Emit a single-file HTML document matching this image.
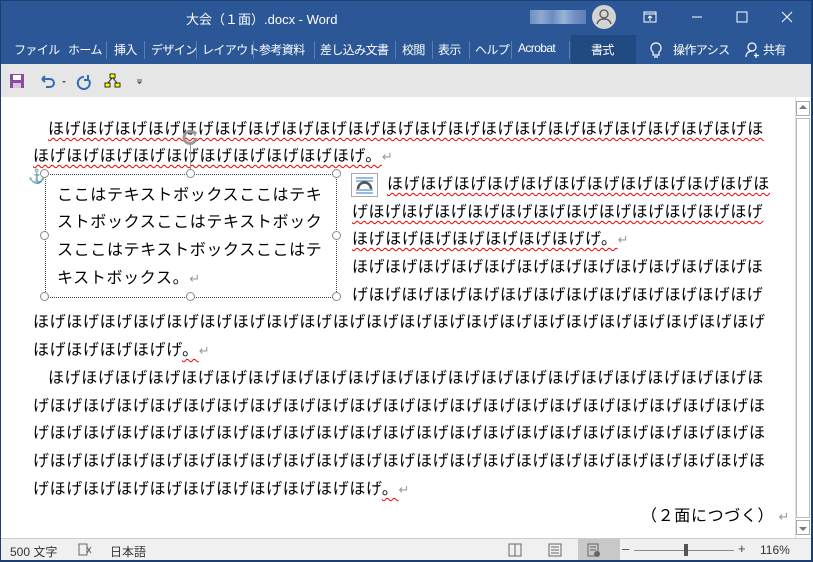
<!DOCTYPE html>
<html><head><meta charset="utf-8"><style>
*{margin:0;padding:0;box-sizing:border-box}
body{width:813px;height:562px;overflow:hidden;font-family:"Liberation Sans","Noto Sans CJK JP",sans-serif;background:#fff;position:relative}
.abs{position:absolute;white-space:nowrap}
#title{left:0;top:0;width:813px;height:35px;background:#2b5797;border:1px solid #1d3f70;border-bottom:none}
#ribbon{left:0;top:35px;width:813px;height:29px;background:#2b5797}
.tab{position:absolute;top:41px;color:#fff;font-size:12px;letter-spacing:-0.6px}
.sep{position:absolute;top:41px;width:1px;height:18px;background:#5b7fb5}
#qat{left:0;top:64px;width:813px;height:33px;background:#e6e6e6}
#doc{left:1px;top:97px;width:794px;height:441px;background:#fff}
#sb{left:795px;top:97px;width:16px;height:441px;background:#fff;border-left:1px solid #ddd}
#status{left:0;top:538px;width:813px;height:24px;background:#f0f0f0;border-top:1px solid #ccc;font-size:12px;color:#333}
.t{position:absolute;white-space:nowrap;font-family:"Noto Sans CJK JP","IPAGothic",sans-serif;font-size:16px;letter-spacing:0.65px;line-height:20px;color:#000}
.w{text-decoration:underline wavy #e00;text-decoration-thickness:1px;text-underline-offset:3px}
.r{color:#999;font-size:13px}
.h{position:absolute;width:9px;height:9px;border:1.5px solid #8a8a8a;background:#fff;border-radius:50%}
</style></head><body>
<div id="title" class="abs"></div>
<div class="abs" style="left:186px;top:9px;color:#fff;font-size:13px">大会（１面）.docx  -  Word</div>
<div class="abs" style="left:530px;top:10px;width:56px;height:14px;background:linear-gradient(90deg,#6e8fc0,#8fa9d0,#6a8cc0,#9bb3d8,#7090c2,#5a7fb8)"></div>
<div class="abs" style="left:592px;top:5px;width:24px;height:24px;border-radius:50%;background:#d4d4d4"><svg width="24" height="24"><circle cx="12" cy="9" r="4" fill="none" stroke="#555" stroke-width="1.3"/><path d="M5 19c1-4 4-5 7-5s6 1 7 5" fill="none" stroke="#555" stroke-width="1.3"/></svg></div>
<svg class="abs" style="left:640px;top:8px" width="170" height="20"><rect x="4" y="4" width="12" height="10" fill="none" stroke="#fff"/><line x1="4" y1="6" x2="16" y2="6" stroke="#fff"/><path d="M10 13V8M8 10l2-2 2 2" stroke="#fff" fill="none"/><line x1="52" y1="9" x2="62" y2="9" stroke="#fff"/><rect x="97" y="4" width="10" height="10" fill="none" stroke="#fff"/><path d="M142 4l10 10M152 4l-10 10" stroke="#fff"/></svg>
<div id="ribbon" class="abs"></div>
<div class="abs" style="left:571px;top:35px;width:65px;height:29px;background:#214a82"></div>
<div class="tab" style="left:14px">ファイル</div>
<div class="tab" style="left:68px">ホーム</div><div class="sep" style="left:106px"></div>
<div class="tab" style="left:114px">挿入</div><div class="sep" style="left:144px"></div>
<div class="tab" style="left:151px">デザイン</div><div class="sep" style="left:196px"></div>
<div class="tab" style="left:202px">レイアウト</div><div class="sep" style="left:253px"></div>
<div class="tab" style="left:259px">参考資料</div><div class="sep" style="left:314px"></div>
<div class="tab" style="left:320px">差し込み文書</div><div class="sep" style="left:395px"></div>
<div class="tab" style="left:402px">校閲</div><div class="sep" style="left:432px"></div>
<div class="tab" style="left:438px">表示</div><div class="sep" style="left:469px"></div>
<div class="tab" style="left:475px">ヘルプ</div><div class="sep" style="left:511px"></div>
<div class="tab" style="left:518px">Acrobat</div><div class="sep" style="left:569px"></div>
<div class="tab" style="left:591px">書式</div>
<svg class="abs" style="left:648px;top:41px" width="16" height="18"><path d="M8 2a5 5 0 0 0-3 9v3h6v-3a5 5 0 0 0-3-9zM6 16h4" fill="none" stroke="#fff" stroke-width="1.2"/></svg>
<div class="tab" style="left:673px">操作アシス</div>
<div class="abs" style="left:731px;top:35px;width:12px;height:29px;background:#2b5797"></div>
<svg class="abs" style="left:744px;top:41px" width="18" height="18"><circle cx="8" cy="6" r="4" fill="none" stroke="#fff" stroke-width="1.2"/><path d="M2 16c0-4 3-6 6-6M12 12v5M10 14.5h5" fill="none" stroke="#fff" stroke-width="1.2"/></svg>
<div class="tab" style="left:763px">共有</div>
<div id="qat" class="abs"></div>
<svg class="abs" style="left:8px;top:72px" width="140" height="18"><rect x="2" y="2" width="14" height="14" fill="#8b4c9e"/><rect x="5" y="3" width="8" height="5" fill="#fff"/><rect x="5" y="11" width="8" height="5" fill="#d9c3e0"/><path d="M34 7h8a4 4 0 0 1 0 8h-4M34 7l3-3M34 7l3 3" fill="none" stroke="#2f6db5" stroke-width="2"/><path d="M54 9l2 2 2-2" fill="#555"/><path d="M76 5a6 6 0 1 0 5 3M80 3v5h-4" fill="none" stroke="#2f6db5" stroke-width="2"/><rect x="102" y="2" width="5" height="4" fill="#ff0" stroke="#000" stroke-width=".8"/><rect x="97" y="11" width="5" height="4" fill="#ff0" stroke="#000" stroke-width=".8"/><rect x="107" y="11" width="5" height="4" fill="#ff0" stroke="#000" stroke-width=".8"/><path d="M104 6l-4 5M105 6l4 5" stroke="#000" stroke-width=".8"/><path d="M129 8h5M130 10h3l-1.5 1.5z" stroke="#555" fill="#555"/></svg>
<div id="doc" class="abs"></div>
<div id="sb" class="abs"><div style="position:absolute;left:0;top:4px;width:14px;height:15px;border:1px solid #aaa;background:#fff"></div><div style="position:absolute;left:0;top:21px;width:14px;height:400px;border:1px solid #bbb"></div><div style="position:absolute;left:0;top:423px;width:14px;height:15px;border:1px solid #aaa"></div></div>
<svg class="abs" style="left:797px;top:102px" width="12" height="10"><path d="M2 7l4-4 4 4z" fill="#777"/></svg>
<svg class="abs" style="left:797px;top:524px" width="12" height="10"><path d="M2 3l4 4 4-4z" fill="#777"/></svg>

<div class="t w" style="left:48px;top:117px">ほげほげほげほげほげほげほげほげほげほげほげほげほげほげほげほげほげほげほげほげほげほ</div>
<div class="t" style="left:33px;top:144px"><span class="w">ほげほげほげほげほげほげほげほげほげほげ。</span><span class="r">↵</span></div>

<div class="abs" style="left:45px;top:174px;width:292px;height:124px;border:1px dotted #444"></div>
<div class="abs" style="left:190px;top:142px;width:1px;height:32px;background:#999"></div>
<svg class="abs" style="left:180px;top:128px" width="22" height="20"><path d="M16 10a6 6 0 1 1-2-5" fill="none" stroke="#999" stroke-width="3"/><path d="M12 2l5 2-2 5z" fill="#999"/></svg>
<div class="h" style="left:40px;top:169px"></div><div class="h" style="left:186px;top:169px"></div><div class="h" style="left:332px;top:169px"></div>
<div class="h" style="left:40px;top:231px"></div><div class="h" style="left:332px;top:231px"></div>
<div class="h" style="left:40px;top:292px"></div><div class="h" style="left:186px;top:292px"></div><div class="h" style="left:332px;top:292px"></div>
<div class="abs" style="left:28px;top:168px;color:#2f74c0;font-size:14px">⚓</div>
<div class="t" style="left:57px;top:183px">ここはテキストボックスここはテキ</div>
<div class="t" style="left:57px;top:210px">ストボックスここはテキストボック</div>
<div class="t" style="left:57px;top:238px">スここはテキストボックスここはテ</div>
<div class="t" style="left:57px;top:266px">キストボックス。<span class="r">↵</span></div>
<svg class="abs" style="left:351px;top:173px" width="28" height="25"><rect x=".5" y=".5" width="26" height="23" fill="#fff" stroke="#aaa"/><path d="M5 5h17M5 8h17M5 17h17M5 20h17" stroke="#2f74c0"/><path d="M7 16a6 6 0 0 1 13 0" fill="none" stroke="#555" stroke-width="2.5"/></svg>

<div class="t w" style="left:387px;top:172px">ほげほげほげほげほげほげほげほげほげほげほげほ</div>
<div class="t w" style="left:352px;top:200px;letter-spacing:0.45px">げほげほげほげほげほげほげほげほげほげほげほげほげ</div>
<div class="t" style="left:352px;top:227px"><span class="w">ほげほげほげほげほげほげほげげ。</span><span class="r">↵</span></div>
<div class="t" style="left:352px;top:255px;letter-spacing:0.45px">ほげほげほげほげほげほげほげほげほげほげほげほげほ</div>
<div class="t" style="left:352px;top:283px;letter-spacing:0.45px">げほげほげほげほげほげほげほげほげほげほげほげほげ</div>
<div class="t" style="left:33px;top:310px">ほげほげほげほげほげほげほげほげほげほげほげほげほげほげほげほげほげほげほげほげほげほげ</div>
<div class="t" style="left:33px;top:338px">ほげほげほげほげげ<span class="w">。</span><span class="r">↵</span></div>
<div class="t" style="left:48px;top:366px">ほげほげほげほげほげほげほげほげほげほげほげほげほげほげほげほげほげほげほげほげほげほ</div>
<div class="t" style="left:33px;top:394px">げほげほげほげほげほげほげほげほげほげほげほげほげほげほげほげほげほげほげほげほげほげほ</div>
<div class="t" style="left:33px;top:421px">げほげほげほげほげほげほげほげほげほげほげほげほげほげほげほげほげほげほげほげほげほげほ</div>
<div class="t" style="left:33px;top:449px">げほげほげほげほげほげほげほげほげほげほげほげほげほげほげほげほげほげほげほげほげほげほ</div>
<div class="t" style="left:33px;top:477px">げほげほげほげほげほげほげほげほげほげほげ<span class="w">。</span><span class="r">↵</span></div>
<div class="t" style="left:641px;top:504px">（２面につづく） <span class="r">↵</span></div>

<div id="status" class="abs"></div>
<div class="abs" style="left:10px;top:543px;font-size:12px;color:#333">500 文字</div>
<svg class="abs" style="left:77px;top:542px" width="16" height="16"><rect x="2" y="2" width="8" height="11" fill="none" stroke="#666"/><path d="M10 5l4 6M14 5l-4 6" stroke="#666"/></svg>
<div class="abs" style="left:110px;top:543px;font-size:12px;color:#333">日本語</div>
<div class="abs" style="left:578px;top:539px;width:42px;height:23px;background:#c8c8c8"></div>
<svg class="abs" style="left:505px;top:541px" width="100" height="18"><rect x="4" y="3" width="12" height="12" fill="none" stroke="#666"/><line x1="10" y1="3" x2="10" y2="15" stroke="#666"/><rect x="44" y="3" width="12" height="12" fill="none" stroke="#666"/><path d="M46 6h8M46 9h8M46 12h8" stroke="#666"/><rect x="83" y="3" width="10" height="12" fill="none" stroke="#666"/><path d="M85 6h6M85 9h6" stroke="#666"/><circle cx="92" cy="13" r="3" fill="#666"/></svg>
<div class="abs" style="left:622px;top:541px;font-size:13px;color:#444">–</div>
<div class="abs" style="left:634px;top:550px;width:100px;height:1px;background:#888"></div>
<div class="abs" style="left:684px;top:544px;width:4px;height:12px;background:#555"></div>
<div class="abs" style="left:738px;top:541px;font-size:13px;color:#444">+</div>
<div class="abs" style="left:760px;top:543px;font-size:12px;color:#333">116%</div>
<div class="abs" style="left:0;top:0;width:1px;height:562px;background:#1d3f70"></div>
<div class="abs" style="left:811px;top:0;width:2px;height:562px;background:#1d3f70"></div>
<div class="abs" style="left:0;top:560px;width:813px;height:2px;background:#1d3f70"></div>
</body></html>
